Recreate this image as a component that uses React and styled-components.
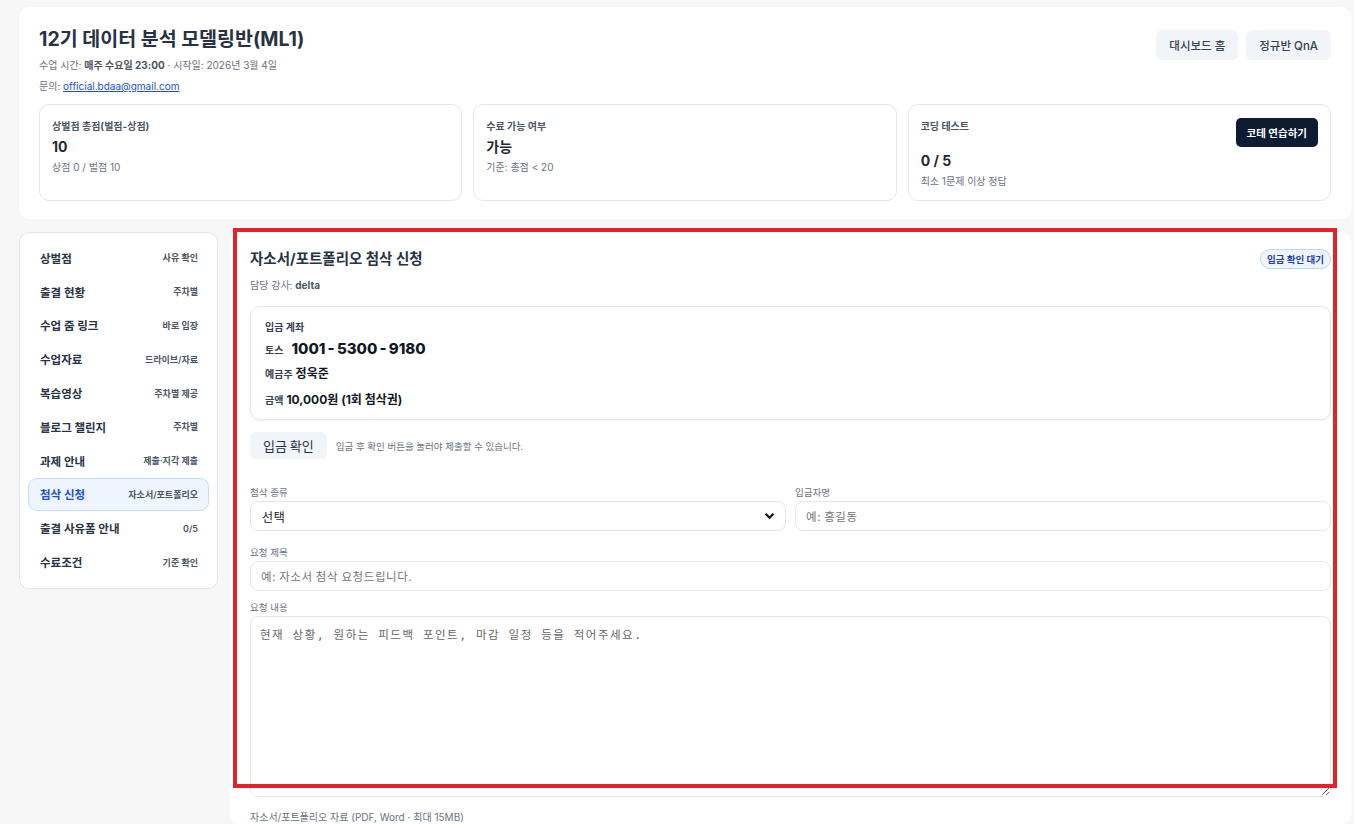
import styled, { createGlobalStyle } from 'styled-components';

const GlobalStyle = createGlobalStyle`
  * { box-sizing: border-box; }
  body {
    margin: 0;
    background: #f7f7f8;
    font-family: 'Inter', 'Noto Sans CJK KR', sans-serif;
    color: #1f2937;
    overflow: hidden;
  }
`;

const Page = styled.div`
  position: relative;
  padding: 7px 3px 0 19px;
  display: flex;
  flex-direction: column;
  gap: 13px;
  height: 824px;
`;

const Card = styled.section`
  background: #fff;
  border-radius: 10px;
`;

const Header = styled(Card)`
  padding: 19px 20px 18px;
`;

const HeadRow = styled.div`
  display: flex;
  justify-content: space-between;
  align-items: flex-start;
`;

const Title = styled.h1`
  margin: 0;
  font-size: 19.5px;
  font-weight: 700;
  color: #273244;
  line-height: 26px;
`;

const Meta = styled.p`
  margin: ${(p) => p.$mt || 0}px 0 0;
  font-size: 10px;
  color: #6b7280;
  line-height: 14px;
  b { color: #4b5563; font-weight: 700; }
  a { color: #1d4ed8; text-decoration: underline; }
`;

const TopButtons = styled.div`
  display: flex;
  gap: 8px;
  margin-top: 4px;
`;

const GhostButton = styled.button`
  height: 30px;
  padding: 0 13px;
  border: none;
  border-radius: 6px;
  background: #f1f4f8;
  color: #374151;
  font-family: inherit;
  font-size: 11.5px;
  font-weight: 500;
`;

const Stats = styled.div`
  display: grid;
  grid-template-columns: repeat(3, 1fr);
  gap: 11px;
  margin-top: 11px;
`;

const StatCard = styled.div`
  border: 1px solid #e5e7eb;
  border-radius: 10px;
  height: 97px;
  padding: 14px 12px;
  display: flex;
  flex-direction: column;
`;

const StatTop = styled.div`
  display: flex;
  justify-content: space-between;
  align-items: flex-start;
`;

const StatLabel = styled.div`
  font-size: 10px;
  font-weight: 700;
  color: #4b5563;
  line-height: 14px;
`;

const StatValue = styled.div`
  font-size: 14px;
  font-weight: 700;
  color: #1f2937;
  margin-top: ${(p) => p.$mt || 5}px;
  line-height: 18px;
`;

const StatSub = styled.div`
  font-size: 10px;
  color: #6b7280;
  margin-top: 4px;
  line-height: 14px;
`;

const DarkButton = styled.button`
  height: 29px;
  padding: 0 11px;
  border: none;
  border-radius: 5px;
  background: #0d1b33;
  color: #fff;
  font-family: inherit;
  font-size: 10.5px;
  font-weight: 700;
  margin-top: -1px;
`;

const Body = styled.div`
  display: grid;
  grid-template-columns: 199px 1fr;
  gap: 12px;
  align-items: start;
  flex: 1;
  min-height: 0;
`;

const Sidebar = styled.nav`
  background: #fff;
  border: 1px solid #e5e7eb;
  border-radius: 10px;
  padding: 8px 8px 9px;
  display: flex;
  flex-direction: column;
`;

const NavItem = styled.div`
  height: 33.8px;
  display: flex;
  align-items: center;
  justify-content: space-between;
  padding: 0 10px 0 11px;
  border-radius: 9px;
  border: 1px solid ${(p) => (p.$active ? '#c7dcf7' : 'transparent')};
  background: ${(p) => (p.$active ? '#eef5fe' : 'transparent')};
  span:first-child {
    font-size: 11.5px;
    font-weight: 700;
    color: ${(p) => (p.$active ? '#1d4ed8' : '#273244')};
  }
  span:last-child {
    font-size: 9px;
    font-weight: 600;
    color: #4b5563;
  }
`;

const Main = styled(Card)`
  padding: 17px 20px 0;
  height: 100%;
  overflow: hidden;
`;

const MainHead = styled.div`
  display: flex;
  justify-content: space-between;
  align-items: center;
`;

const SectionTitle = styled.h2`
  margin: 0;
  font-size: 14.5px;
  font-weight: 700;
  color: #273244;
  line-height: 20px;
`;

const Badge = styled.span`
  height: 20px;
  padding: 0 6px;
  display: inline-flex;
  align-items: center;
  border-radius: 10px;
  border: 1px solid #bfd6f6;
  background: #eef5fe;
  color: #1e40af;
  font-size: 9.5px;
  font-weight: 700;
`;

const AccountBox = styled.div`
  margin-top: 14px;
  border: 1px solid #e5e7eb;
  border-radius: 10px;
  box-shadow: 0 1px 3px rgba(0, 0, 0, 0.06);
  padding: 12px 14px;
  height: 114px;
  display: flex;
  flex-direction: column;
`;

const AccLine = styled.div`
  display: flex;
  align-items: baseline;
  gap: ${(p) => p.$gap || 4}px;
  height: ${(p) => p.$h || 24}px;
  line-height: ${(p) => p.$h || 24}px;
  color: #111827;
  font-weight: 700;
`;

const AccKey = styled.span`
  font-size: 10px;
  color: #374151;
  font-weight: 700;
`;

const AccNumber = styled.span`
  font-size: 15px;
  font-weight: 800;
  color: #111827;
`;

const AccValue = styled.span`
  font-size: 12px;
  font-weight: 700;
  color: #111827;
`;

const ConfirmRow = styled.div`
  display: flex;
  align-items: center;
  gap: 9px;
  margin-top: 12px;
`;

const ConfirmButton = styled.button`
  height: 27px;
  padding: 0 13px;
  border: none;
  border-radius: 6px;
  background: #f1f4f8;
  color: #273244;
  font-family: 'Noto Sans CJK KR', sans-serif;
  font-size: 13px;
`;

const Hint = styled.span`
  font-size: 9.5px;
  color: #6b7280;
`;

const FormGrid = styled.div`
  display: grid;
  grid-template-columns: 1fr 1fr;
  gap: 10px 9px;
  margin-top: 27px;
`;

const Field = styled.label`
  display: flex;
  flex-direction: column;
  gap: 2px;
  grid-column: ${(p) => (p.$wide ? '1 / -1' : 'auto')};
  margin-top: ${(p) => p.$mt || 0}px;
`;

const FieldLabel = styled.span`
  font-size: 9.5px;
  color: #6b7280;
  line-height: 13px;
`;

const inputBase = `
  width: 100%;
  border: 1px solid #e5e7eb;
  border-radius: 8px;
  background: #fff;
  outline: none;
  font-family: 'Noto Sans CJK KR', sans-serif;
  font-size: 11.5px;
  letter-spacing: 0.6px;
  color: #111827;
  &::placeholder { color: #757575; }
`;

const TextInput = styled.input`
  ${inputBase}
  height: 30px;
  padding: 0 10px;
`;

const SelectBox = styled.div`
  height: 30px;
  border: 1px solid #e5e7eb;
  border-radius: 8px;
  display: flex;
  align-items: center;
  justify-content: space-between;
  padding: 0 10px 0 11px;
  font-family: 'Noto Sans CJK KR', sans-serif;
  font-size: 12px;
  letter-spacing: 0.6px;
  color: #111827;
`;

const TextArea = styled.textarea`
  ${inputBase}
  height: 181px;
  padding: 9px 9px;
  resize: vertical;
  font-family: 'DejaVu Sans Mono', 'Noto Sans CJK KR', monospace;
  font-size: 11.5px;
  letter-spacing: 1.5px;
  &::placeholder { color: #666; }
`;

const FileLabel = styled.div`
  margin-top: 13px;
  font-size: 10px;
  line-height: 14px;
  color: #6b7280;
`;

const Highlight = styled.div`
  position: absolute;
  left: 233px;
  top: 228px;
  width: 1104px;
  height: 560px;
  border: 4px solid #e4222b;
  pointer-events: none;
`;

const navItems = [
  ['상벌점', '사유 확인'],
  ['출결 현황', '주차별'],
  ['수업 줌 링크', '바로 입장'],
  ['수업자료', '드라이브/자료'],
  ['복습영상', '주차별 제공'],
  ['블로그 챌린지', '주차별'],
  ['과제 안내', '제출·지각 제출'],
  ['첨삭 신청', '자소서/포트폴리오'],
  ['출결 사유폼 안내', '0/5'],
  ['수료조건', '기준 확인'],
];

export default function App() {
  return (
    <>
      <GlobalStyle />
      <Page>
        <Header>
          <HeadRow>
            <div>
              <Title>12기 데이터 분석 모델링반(ML1)</Title>
              <Meta $mt={6}>
                수업 시간: <b>매주 수요일 23:00</b> · 시작일: 2026년 3월 4일
              </Meta>
              <Meta $mt={7}>
                문의: <a href="#">official.bdaa@gmail.com</a>
              </Meta>
            </div>
            <TopButtons>
              <GhostButton>대시보드 홈</GhostButton>
              <GhostButton>정규반 QnA</GhostButton>
            </TopButtons>
          </HeadRow>
          <Stats>
            <StatCard>
              <StatLabel>상벌점 총점(벌점-상점)</StatLabel>
              <StatValue>10</StatValue>
              <StatSub>상점 0 / 벌점 10</StatSub>
            </StatCard>
            <StatCard>
              <StatLabel>수료 가능 여부</StatLabel>
              <StatValue>가능</StatValue>
              <StatSub>기준: 총점 &lt; 20</StatSub>
            </StatCard>
            <StatCard>
              <StatTop>
                <StatLabel>코딩 테스트</StatLabel>
                <DarkButton>코테 연습하기</DarkButton>
              </StatTop>
              <StatValue $mt={0}>0 / 5</StatValue>
              <StatSub>최소 1문제 이상 정답</StatSub>
            </StatCard>
          </Stats>
        </Header>
        <Body>
          <Sidebar>
            {navItems.map(([label, sub]) => (
              <NavItem key={label} $active={label === '첨삭 신청'}>
                <span>{label}</span>
                <span>{sub}</span>
              </NavItem>
            ))}
          </Sidebar>
          <Main>
            <MainHead>
              <SectionTitle>자소서/포트폴리오 첨삭 신청</SectionTitle>
              <Badge>입금 확인 대기</Badge>
            </MainHead>
            <Meta $mt={9}>
              담당 강사: <b>delta</b>
            </Meta>
            <AccountBox>
              <AccLine $h={16}>
                <AccKey>입금 계좌</AccKey>
              </AccLine>
              <AccLine $gap={8} $h={28}>
                <AccKey>토스</AccKey>
                <AccNumber>{'1001\u2009-\u20095300\u2009-\u20099180'}</AccNumber>
              </AccLine>
              <AccLine $gap={3} $h={22}>
                <AccKey>예금주</AccKey>
                <AccValue>정욱준</AccValue>
              </AccLine>
              <AccLine $gap={3} $h={30}>
                <AccKey>금액</AccKey>
                <AccValue>10,000원 (1회 첨삭권)</AccValue>
              </AccLine>
            </AccountBox>
            <ConfirmRow>
              <ConfirmButton>입금 확인</ConfirmButton>
              <Hint>입금 후 확인 버튼을 눌러야 제출할 수 있습니다.</Hint>
            </ConfirmRow>
            <FormGrid>
              <Field>
                <FieldLabel>첨삭 종류</FieldLabel>
                <SelectBox>
                  <span>선택</span>
                  <svg width="11" height="8" viewBox="0 0 11 8">
                    <path d="M1.5 1.8 L5.5 5.8 L9.5 1.8" fill="none" stroke="#111" strokeWidth="2.2" />
                  </svg>
                </SelectBox>
              </Field>
              <Field>
                <FieldLabel>입금자명</FieldLabel>
                <TextInput placeholder="예: 홍길동" />
              </Field>
              <Field $wide $mt={5}>
                <FieldLabel>요청 제목</FieldLabel>
                <TextInput placeholder="예: 자소서 첨삭 요청드립니다." />
              </Field>
              <Field $wide>
                <FieldLabel>요청 내용</FieldLabel>
                <TextArea placeholder="현재 상황, 원하는 피드백 포인트, 마감 일정 등을 적어주세요." />
              </Field>
            </FormGrid>
            <FileLabel>자소서/포트폴리오 자료 (PDF, Word · 최대 15MB)</FileLabel>
          </Main>
        </Body>
        <Highlight />
      </Page>
    </>
  );
}
